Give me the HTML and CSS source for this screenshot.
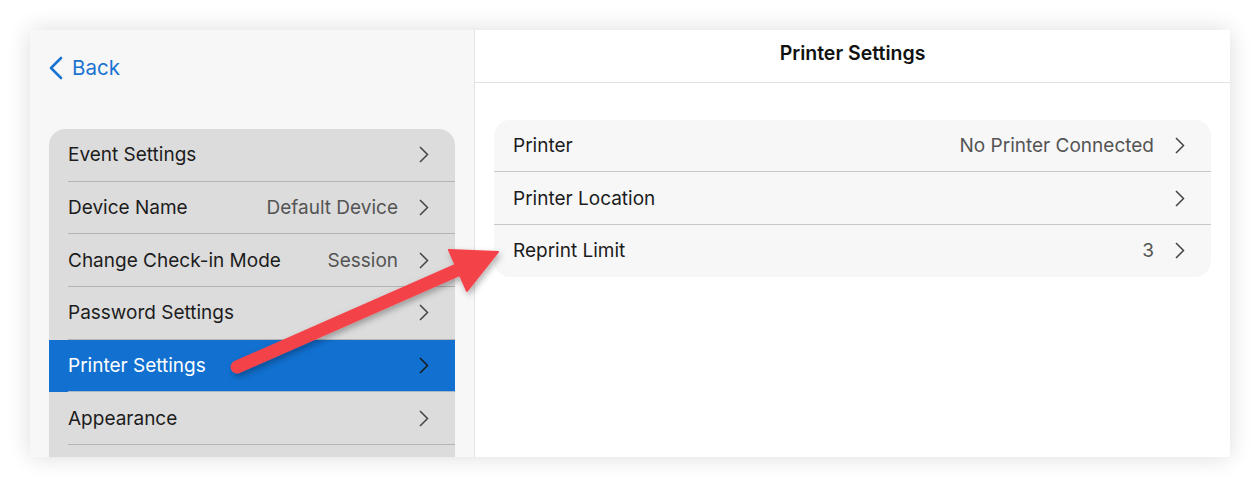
FILE: index.html
```html
<!DOCTYPE html>
<html>
<head>
<meta charset="utf-8">
<link rel="stylesheet" href="styles.css">
</head>
<body>
<div class="frame">
  <aside class="sidebar">
    <div class="back">
      <svg class="back-chev" width="14" height="24" viewBox="0 0 14 24"><polyline points="12,2 2,12 12,22" fill="none" stroke="#1a73d1" stroke-width="2.6" stroke-linecap="round" stroke-linejoin="round"/></svg>
      <span>Back</span>
    </div>
    <div class="list">
      <div class="row"><div class="row-inner"><span class="label">Event Settings</span><span class="value"></span><svg class="chev" width="10" height="17" viewBox="0 0 10 17"><polyline points="1,1 8.5,8.5 1,16" fill="none" stroke="#444" stroke-width="1.5"/></svg></div></div>
      <div class="row"><div class="row-inner"><span class="label">Device Name</span><span class="value">Default Device</span><svg class="chev" width="10" height="17" viewBox="0 0 10 17"><polyline points="1,1 8.5,8.5 1,16" fill="none" stroke="#444" stroke-width="1.5"/></svg></div></div>
      <div class="row"><div class="row-inner"><span class="label">Change Check-in Mode</span><span class="value">Session</span><svg class="chev" width="10" height="17" viewBox="0 0 10 17"><polyline points="1,1 8.5,8.5 1,16" fill="none" stroke="#444" stroke-width="1.5"/></svg></div></div>
      <div class="row"><div class="row-inner"><span class="label">Password Settings</span><span class="value"></span><svg class="chev" width="10" height="17" viewBox="0 0 10 17"><polyline points="1,1 8.5,8.5 1,16" fill="none" stroke="#444" stroke-width="1.5"/></svg></div></div>
      <div class="row selected"><div class="row-inner"><span class="label">Printer Settings</span><span class="value"></span><svg class="chev" width="10" height="17" viewBox="0 0 10 17"><polyline points="1,1 8.5,8.5 1,16" fill="none" stroke="#1b1b1b" stroke-width="1.5"/></svg></div></div>
      <div class="row"><div class="row-inner"><span class="label">Appearance</span><span class="value"></span><svg class="chev" width="10" height="17" viewBox="0 0 10 17"><polyline points="1,1 8.5,8.5 1,16" fill="none" stroke="#444" stroke-width="1.5"/></svg></div></div>
      <div class="row"><div class="row-inner"><span class="label"></span></div></div>
    </div>
  </aside>
  <main class="detail">
    <header class="detail-header">Printer Settings</header>
    <div class="detail-body">
      <div class="group">
        <div class="grow"><span class="label">Printer</span><span class="value">No Printer Connected</span><svg class="chev" width="10" height="17" viewBox="0 0 10 17"><polyline points="1,1 8.5,8.5 1,16" fill="none" stroke="#444" stroke-width="1.5"/></svg></div>
        <div class="grow"><span class="label">Printer Location</span><span class="value"></span><svg class="chev" width="10" height="17" viewBox="0 0 10 17"><polyline points="1,1 8.5,8.5 1,16" fill="none" stroke="#444" stroke-width="1.5"/></svg></div>
        <div class="grow"><span class="label">Reprint Limit</span><span class="value">3</span><svg class="chev" width="10" height="17" viewBox="0 0 10 17"><polyline points="1,1 8.5,8.5 1,16" fill="none" stroke="#444" stroke-width="1.5"/></svg></div>
      </div>
    </div>
  </main>
</div>
<svg class="arrow" width="1260" height="487" viewBox="0 0 1260 487">
  <defs>
    <filter id="sh" x="-20%" y="-20%" width="140%" height="140%">
      <feDropShadow dx="2" dy="3" stdDeviation="3" flood-color="#000" flood-opacity="0.3"/>
    </filter>
  </defs>
  <g filter="url(#sh)" fill="#f4434a" stroke="#f4434a">
    <line x1="237" y1="367" x2="462" y2="268" stroke-width="13" stroke-linecap="round"/>
    <polygon points="449,250 498,252 467,291" stroke-width="2" stroke-linejoin="round"/>
  </g>
</svg>
</body>
</html>
```
FILE: styles.css
```css
html, body {
  margin: 0;
  padding: 0;
  background: #ffffff;
}
body {
  font-family: Inter, "Noto Sans", "Liberation Sans", sans-serif;
  color: #1c1c1c;
  width: 1260px;
  height: 487px;
  overflow: hidden;
  position: relative;
}
.frame {
  position: relative;
  margin: 30px 0 0 30px;
  width: 1200px;
  height: 427px;
  display: flex;
  overflow: hidden;
  box-shadow: 0 0 22px rgba(0, 0, 0, 0.14);
}
.sidebar {
  width: 445px;
  flex: none;
  background: #f7f7f7;
  border-right: 1px solid #e3e3e3;
  padding: 0 19px;
  box-sizing: border-box;
}
.back {
  height: 75px;
  display: flex;
  align-items: center;
  gap: 9px;
  color: #1a73d1;
  font-size: 20.5px;
}
.list {
  margin-top: 24px;
  background: #dcdcdc;
  border-radius: 16px 16px 0 0;
  overflow: hidden;
}
.row {
  padding-left: 19px;
  height: 52.7px;
  box-sizing: border-box;
}
.row.selected {
  background: #1170d0;
  color: #ffffff;
}
.row-inner {
  height: 100%;
  box-sizing: border-box;
  display: flex;
  align-items: center;
  border-bottom: 1px solid #b4b4b4;
  padding-right: 26px;
  font-size: 19px;
}
.row.selected .row-inner {
  border-bottom-color: #a9b8c8;
}
.label {
  flex: 1;
}
.value {
  color: #545454;
  margin-right: 21px;
}
.chev {
  flex: none;
  display: block;
}
.detail {
  flex: 1;
  background: #ffffff;
  display: flex;
  flex-direction: column;
}
.detail-header {
  height: 53px;
  box-sizing: border-box;
  padding-bottom: 7px;
  border-bottom: 1px solid #e2e2e2;
  display: flex;
  align-items: center;
  justify-content: center;
  font-weight: 600;
  font-size: 19.5px;
  color: #111;
}
.detail-body {
  padding: 37px 19px 0 19px;
}
.group {
  background: #f7f7f7;
  border-radius: 16px;
  overflow: hidden;
}
.grow {
  height: 52.4px;
  box-sizing: border-box;
  display: flex;
  align-items: center;
  padding: 0 26px 0 19px;
  font-size: 19px;
  border-bottom: 1px solid #c9c9c9;
}
.grow:last-child {
  border-bottom: none;
}
.arrow {
  position: absolute;
  left: 0;
  top: 0;
  pointer-events: none;
}
```
